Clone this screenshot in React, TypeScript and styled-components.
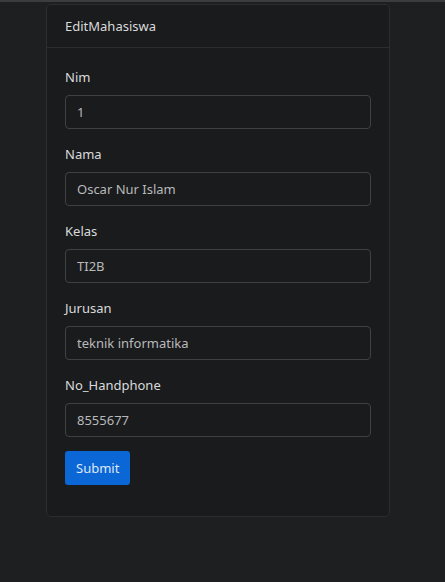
import React from "react"
import styled, { createGlobalStyle } from "styled-components"

const GlobalStyle = createGlobalStyle`
  html, body {
    margin: 0;
    padding: 0;
    background: #1e1f21;
    font-family: "Noto Sans", "Open Sans", sans-serif;
    color: #dcdddf;
  }
`

const TopBar = styled.div`
  height: 2px;
  background: #3b3c3e;
`

const Page = styled.div`
  min-height: 580px;
  padding: 2px 0 0 46px;
`

const Card = styled.div`
  width: 342px;
  background: #1a1b1d;
  border: 1px solid #2c2d30;
  border-radius: 5px;
`

const CardHeader = styled.div`
  height: 42px;
  padding: 0 18px;
  display: flex;
  align-items: center;
  font-size: 13px;
  color: #d9dadc;
  border-bottom: 1px solid #2c2d30;
`

const CardBody = styled.form`
  padding: 19px 18px 31px;
`

const Group = styled.div`
  margin-bottom: 15px;
`

const Label = styled.label`
  display: block;
  font-size: 13px;
  line-height: 21px;
  margin-bottom: 7px;
  color: #d9dadc;
`

const Input = styled.input`
  box-sizing: border-box;
  width: 306px;
  height: 34px;
  padding: 0 11px;
  background: #1a1b1d;
  border: 1px solid #404144;
  border-radius: 4px;
  color: #b8b9bb;
  font-family: inherit;
  font-size: 13px;
  outline: none;
`

const Button = styled.button<{ tone?: string }>`
  height: 34px;
  padding: 0 11px;
  margin-top: -1px;
  background: ${p => p.tone || "#0b66d6"};
  border: none;
  border-radius: 3px;
  color: #dfe8f6;
  font-family: inherit;
  font-size: 13px;
  cursor: pointer;
`

const fields = [
  { label: "Nim", value: "1" },
  { label: "Nama", value: "Oscar Nur Islam" },
  { label: "Kelas", value: "TI2B" },
  { label: "Jurusan", value: "teknik informatika" },
  { label: "No_Handphone", value: "8555677" }
]

export default function App() {
  return (
    <>
      <GlobalStyle />
      <TopBar />
      <Page>
        <Card>
          <CardHeader>EditMahasiswa</CardHeader>
          <CardBody onSubmit={e => e.preventDefault()}>
            {fields.map(f => (
              <Group key={f.label}>
                <Label>{f.label}</Label>
                <Input type="text" defaultValue={f.value} />
              </Group>
            ))}
            <Button type="submit">Submit</Button>
          </CardBody>
        </Card>
      </Page>
    </>
  )
}
